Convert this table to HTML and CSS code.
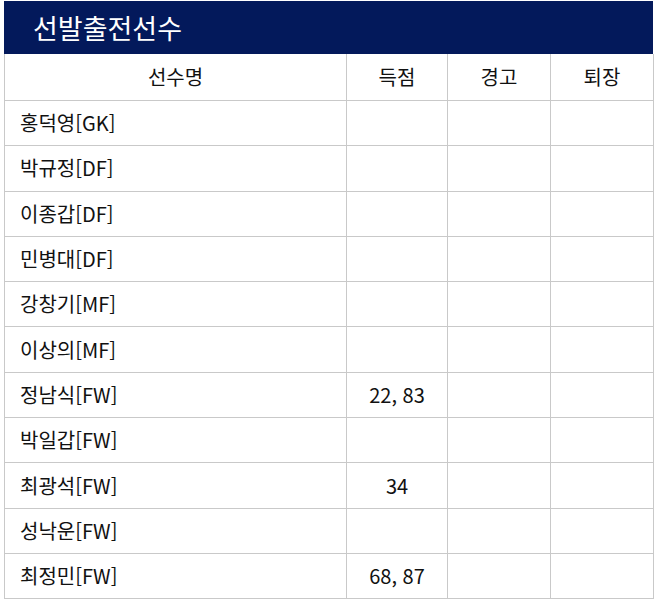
FILE: index.html
```html
<!DOCTYPE html>
<html lang="ko">
<head>
<meta charset="utf-8">
<link rel="stylesheet" href="styles.css">
</head>
<body>
<div class="wrap">
  <div class="title">선발출전선수</div>
  <table class="lineup">
    <colgroup>
      <col class="c-name"><col class="c-goal"><col class="c-warn"><col class="c-off">
    </colgroup>
    <thead>
      <tr><th>선수명</th><th>득점</th><th>경고</th><th>퇴장</th></tr>
    </thead>
    <tbody>
      <tr><td class="name">홍덕영[GK]</td><td></td><td></td><td></td></tr>
      <tr><td class="name">박규정[DF]</td><td></td><td></td><td></td></tr>
      <tr><td class="name">이종갑[DF]</td><td></td><td></td><td></td></tr>
      <tr><td class="name">민병대[DF]</td><td></td><td></td><td></td></tr>
      <tr><td class="name">강창기[MF]</td><td></td><td></td><td></td></tr>
      <tr><td class="name">이상의[MF]</td><td></td><td></td><td></td></tr>
      <tr><td class="name">정남식[FW]</td><td>22, 83</td><td></td><td></td></tr>
      <tr><td class="name">박일갑[FW]</td><td></td><td></td><td></td></tr>
      <tr><td class="name">최광석[FW]</td><td>34</td><td></td><td></td></tr>
      <tr><td class="name">성낙운[FW]</td><td></td><td></td><td></td></tr>
      <tr><td class="name">최정민[FW]</td><td>68, 87</td><td></td><td></td></tr>
    </tbody>
  </table>
</div>
</body>
</html>
```
FILE: styles.css
```css
html, body {
  margin: 0;
  padding: 0;
  background: #ffffff;
}
body {
  font-family: "Noto Sans CJK KR", "Noto Sans", sans-serif;
  color: #111111;
}
.wrap {
  width: 649px;
  padding: 1px 0 0 4px;
}
.title {
  height: 53px;
  background: #03195b;
  color: #ffffff;
  font-size: 27px;
  line-height: 53px;
  padding-left: 29px;
  box-sizing: border-box;
}
.lineup {
  width: 649px;
  border-collapse: collapse;
  table-layout: fixed;
  font-size: 20px;
}
.c-name { width: 342px; }
.c-goal { width: 101px; }
.c-warn { width: 103px; }
.c-off  { width: 103px; }
.lineup th,
.lineup td {
  border: 1px solid #c9c9c9;
  height: 44.3px;
  padding: 0;
  text-align: center;
  font-weight: normal;
  line-height: 44px;
}
.lineup thead th {
  border-top: none;
  height: 46px;
}
.lineup td.name {
  text-align: left;
  padding-left: 15px;
}
```
